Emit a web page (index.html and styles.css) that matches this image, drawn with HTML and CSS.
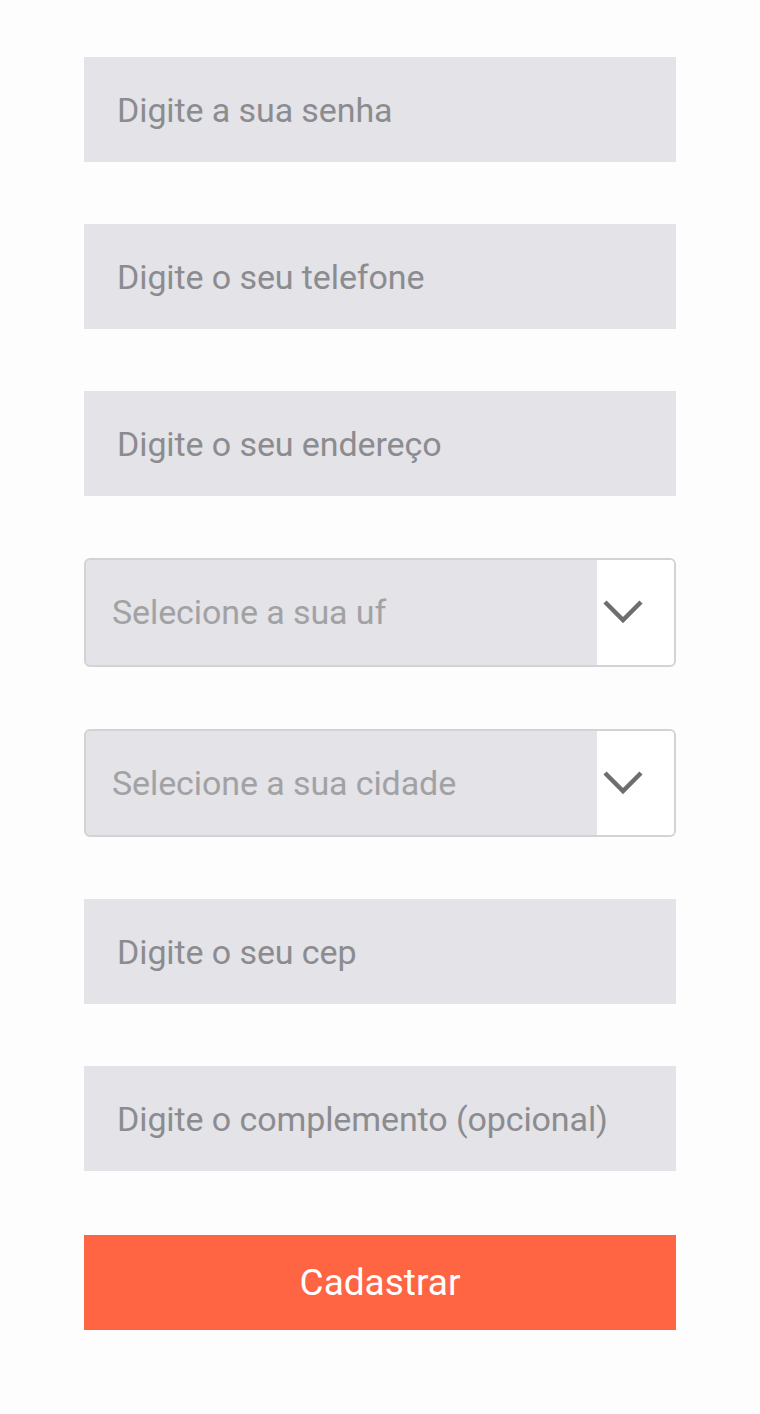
FILE: index.html
```html
<!DOCTYPE html>
<html lang="pt">
<head>
<meta charset="utf-8">
<title>Cadastro</title>
<link rel="stylesheet" href="styles.css">
</head>
<body>
<form class="form">
  <div class="field"><span class="ph">Digite a sua senha</span></div>
  <div class="field"><span class="ph">Digite o seu telefone</span></div>
  <div class="field"><span class="ph">Digite o seu endereço</span></div>
  <div class="select">
    <span class="sel-ph">Selecione a sua uf</span>
    <span class="sel-btn"><svg width="44" height="28" viewBox="0 0 44 28"><path d="M4 4 L22 22 L40 4" fill="none" stroke="#6e6e6e" stroke-width="4.5"/></svg></span>
  </div>
  <div class="select">
    <span class="sel-ph">Selecione a sua cidade</span>
    <span class="sel-btn"><svg width="44" height="28" viewBox="0 0 44 28"><path d="M4 4 L22 22 L40 4" fill="none" stroke="#6e6e6e" stroke-width="4.5"/></svg></span>
  </div>
  <div class="field"><span class="ph">Digite o seu cep</span></div>
  <div class="field"><span class="ph">Digite o complemento (opcional)</span></div>
  <div class="button">Cadastrar</div>
</form>
</body>
</html>
```
FILE: styles.css
```css
html, body {
  margin: 0;
  padding: 0;
  background: #fdfdfd;
  font-family: Roboto, "Noto Sans", sans-serif;
}
.form {
  width: 592px;
  margin: 0 auto;
  padding-top: 57px;
  display: flex;
  flex-direction: column;
  gap: 62px;
}
.field {
  height: 105px;
  background: #e3e3e8;
  display: flex;
  align-items: center;
  padding-left: 33px;
}
.ph {
  font-size: 34px;
  color: #8c8c90;
  letter-spacing: -0.1px;
}
.select {
  height: 104.5px;
  border: 2px solid #d3d3d6;
  border-radius: 6px;
  background: #e3e3e8;
  display: flex;
  align-items: center;
  overflow: hidden;
}
.sel-ph {
  flex: 1;
  padding-left: 26px;
  font-size: 34px;
  color: #a2a2a4;
  letter-spacing: -0.1px;
}
.sel-btn {
  width: 77px;
  align-self: stretch;
  background: #ffffff;
  display: flex;
  align-items: center;
  justify-content: flex-start;
  padding-left: 4px;
  box-sizing: border-box;
}
.button {
  height: 95px;
  margin-top: 2px;
  background: #ff6443;
  color: #ffffff;
  font-size: 37px;
  display: flex;
  align-items: center;
  justify-content: center;
}
```
